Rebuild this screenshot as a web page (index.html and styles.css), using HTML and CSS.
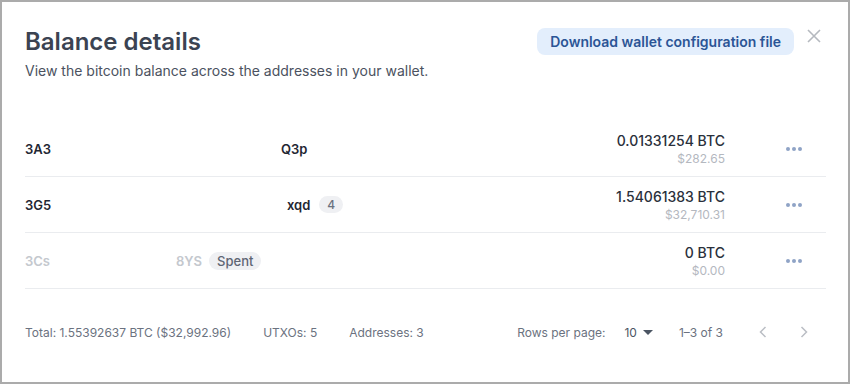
FILE: index.html
```html
<!DOCTYPE html>
<html lang="en">
<head>
  <meta charset="UTF-8" />
  <title>Balance details</title>
  <link rel="stylesheet" href="styles.css">
</head>
<body>
  <div class="modal">
    <header class="modal-head">
      <div class="head-text">
        <h1>Balance details</h1>
        <p>View the bitcoin balance across the addresses in your wallet.</p>
      </div>
      <div class="head-actions">
        <button class="btn-download">Download wallet configuration file</button>
        <button class="btn-close" title="Close">
          <svg width="14" height="14" viewBox="0 0 14 14"><path d="M1 1L13 13M13 1L1 13" stroke="#b5b9bf" stroke-width="1.6" fill="none"/></svg>
        </button>
      </div>
    </header>

    <div class="rows">
      <div class="row">
        <div class="addr"><span class="addr-head w1">3A3</span><span>Q3p</span></div>
        <div class="amount">
          <div class="btc">0.01331254 BTC</div>
          <div class="usd">$282.65</div>
        </div>
        <div class="row-actions">
          <svg width="16" height="4" viewBox="0 0 16 4"><circle cx="2" cy="2" r="2"/><circle cx="8" cy="2" r="2"/><circle cx="14" cy="2" r="2"/></svg>
        </div>
      </div>
      <div class="row">
        <div class="addr"><span class="addr-head w2">3G5</span><span>xqd</span><span class="badge">4</span></div>
        <div class="amount">
          <div class="btc">1.54061383 BTC</div>
          <div class="usd">$32,710.31</div>
        </div>
        <div class="row-actions">
          <svg width="16" height="4" viewBox="0 0 16 4"><circle cx="2" cy="2" r="2"/><circle cx="8" cy="2" r="2"/><circle cx="14" cy="2" r="2"/></svg>
        </div>
      </div>
      <div class="row spent">
        <div class="addr"><span class="addr-head w3">3Cs</span><span>8YS</span><span class="badge badge-spent">Spent</span></div>
        <div class="amount">
          <div class="btc">0 BTC</div>
          <div class="usd">$0.00</div>
        </div>
        <div class="row-actions">
          <svg width="16" height="4" viewBox="0 0 16 4"><circle cx="2" cy="2" r="2"/><circle cx="8" cy="2" r="2"/><circle cx="14" cy="2" r="2"/></svg>
        </div>
      </div>
    </div>

    <footer class="table-foot">
      <div class="foot-stats">
        <span>Total: 1.55392637 BTC ($32,992.96)</span>
        <span>UTXOs: 5</span>
        <span>Addresses: 3</span>
      </div>
      <div class="pager">
        <span>Rows per page:</span>
        <span class="per-page">10
          <svg width="10" height="5" viewBox="0 0 10 5"><path d="M0 0H10L5 5Z" fill="#4b5563"/></svg>
        </span>
        <span class="range">1–3 of 3</span>
        <button class="page-btn" disabled>
          <svg width="8" height="12" viewBox="0 0 8 12"><path d="M6.5 1L1.5 6L6.5 11" stroke="#babec4" stroke-width="1.5" fill="none"/></svg>
        </button>
        <button class="page-btn" disabled>
          <svg width="8" height="12" viewBox="0 0 8 12"><path d="M1.5 1L6.5 6L1.5 11" stroke="#babec4" stroke-width="1.5" fill="none"/></svg>
        </button>
      </div>
    </footer>
  </div>
</body>
</html>
```

FILE: styles.css
```css
* {
  box-sizing: border-box;
}

body {
  margin: 0;
  font-family: 'Inter', 'Noto Sans', sans-serif;
  background: #fff;
}

.modal {
  height: 100vh;
  border: 2px solid #ababab;
  background: #fff;
  display: flex;
  flex-direction: column;
}

.modal-head {
  height: 119px;
  padding: 24px 27px 0 23px;
  display: flex;
  justify-content: space-between;
  align-items: flex-start;
}

.modal-head h1 {
  margin: 0;
  font-size: 24px;
  line-height: 32px;
  font-weight: 600;
  color: #3b4352;
}

.modal-head p {
  margin: 3px 0 0;
  font-size: 14px;
  line-height: 20px;
  color: #4b5260;
}

.head-actions {
  display: flex;
  align-items: flex-start;
  gap: 13px;
}

.btn-download {
  margin-top: 2px;
  padding: 4px 13px;
  font-family: inherit;
  font-size: 14px;
  line-height: 19px;
  font-weight: 600;
  color: #2b5596;
  background: #e3eefc;
  border: none;
  border-radius: 8px;
  cursor: pointer;
}

.btn-close {
  margin-top: 3px;
  padding: 0;
  width: 14px;
  height: 14px;
  border: none;
  background: none;
  cursor: pointer;
  display: flex;
}

.rows {
  padding: 0 22px 0 23px;
}

.row {
  height: 56px;
  display: flex;
  align-items: center;
  border-bottom: 1px solid #eaecef;
}

.addr {
  flex: 1;
  display: flex;
  align-items: center;
  font-size: 13px;
  font-weight: 600;
  color: #1f2733;
}

.addr-head {
  display: inline-block;
}

.addr-head.w1 { width: 256px; }
.addr-head.w2 { width: 262px; }
.addr-head.w3 { width: 151px; }

.spent .addr {
  color: #c4c8ce;
}

.badge {
  margin-left: 9px;
  padding: 0 8px;
  height: 17px;
  line-height: 17px;
  border-radius: 9px;
  background: #eff0f3;
  color: #6b7280;
  font-size: 12px;
  font-weight: 500;
}

.badge-spent {
  margin-left: 7px;
  height: 18px;
  line-height: 18px;
  font-size: 13px;
  color: #5e6573;
  padding: 0 8px;
}

.amount {
  text-align: right;
}

.btc {
  font-size: 14px;
  line-height: 20px;
  font-weight: 500;
  color: #2a303b;
}

.usd {
  font-size: 12px;
  line-height: 16px;
  color: #b4b8bf;
}

.row-actions {
  width: 101px;
  padding-left: 61px;
  display: flex;
  fill: #8fa3c6;
}

.table-foot {
  padding: 31px 32px 0 23px;
  display: flex;
  justify-content: space-between;
  align-items: center;
  font-size: 12px;
  color: #6b7280;
}

.foot-stats {
  display: flex;
  gap: 32px;
}

.pager {
  display: flex;
  align-items: center;
  height: 24px;
}

.per-page {
  margin-left: 19px;
  display: flex;
  align-items: center;
  gap: 6px;
  color: #4b5563;
}

.range {
  margin-left: 26px;
}

.page-btn {
  width: 24px;
  height: 24px;
  padding: 0;
  border: none;
  background: none;
  display: flex;
  align-items: center;
  justify-content: center;
  margin-left: 28px;
}

.page-btn + .page-btn {
  margin-left: 17px;
}
```
